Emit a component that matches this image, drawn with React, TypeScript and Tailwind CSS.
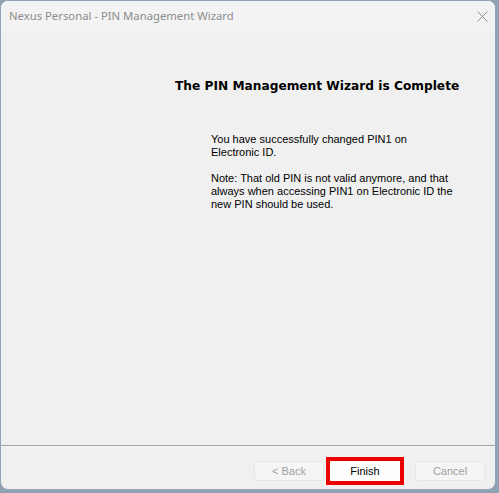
import React from "react";

function WizardButton({
  label,
  disabled = false,
}: {
  label: string;
  disabled?: boolean;
}) {
  return (
    <div
      className={
        "w-[70px] h-[20px] rounded-[3px] flex items-center justify-center text-[11px] font-['Liberation_Sans',Arial,sans-serif] " +
        (disabled
          ? "bg-[#f5f5f5] border border-[#e6e6e6] text-[#a0a0a0]"
          : "bg-[#fdfdfd] text-black")
      }
    >
      {label}
    </div>
  );
}

export default function App() {
  return (
    <div className="w-[499px] h-[493px] bg-[#8ea2b4] overflow-hidden">
      <div className="w-[496px] h-[490px] rounded-[8px] border border-[#94a3b2] bg-[#f0f0f0] overflow-hidden flex flex-col">
        {/* Title bar */}
        <div className="h-[30px] bg-[#f3f3f3] flex items-center justify-between pl-[8px] pr-[7px] shrink-0">
          <span className="text-[11.3px] text-[#8c8c8c] font-['Noto_Sans',sans-serif]">
            Nexus Personal - PIN Management Wizard
          </span>
          <svg width="11" height="11" viewBox="0 0 11 11">
            <path d="M0.5 0.5 L10.5 10.5 M10.5 0.5 L0.5 10.5" stroke="#8c8c8c" strokeWidth="1" />
          </svg>
        </div>

        {/* Body */}
        <div className="flex-1 font-['Liberation_Sans',Arial,sans-serif]">
          <h1 className="pl-[174px] pt-[48px] text-[12.2px] leading-[15px] font-bold text-black whitespace-nowrap font-['DejaVu_Sans',Verdana,sans-serif]">
            The PIN Management Wizard is Complete
          </h1>
          <div className="pl-[210px] pt-[39px] text-[11px] leading-[13px] text-black whitespace-nowrap">
            <p>
              You have successfully changed PIN1 on
              <br />
              Electronic ID.
            </p>
            <p className="mt-[13px]">
              Note: That old PIN is not valid anymore, and that
              <br />
              always when accessing PIN1 on Electronic ID the
              <br />
              new PIN should be used.
            </p>
          </div>
        </div>

        {/* Separator */}
        <div className="h-[1px] bg-[#a0a0a0] shrink-0" />
        <div className="h-[1px] bg-[#fafafa] shrink-0" />

        {/* Buttons */}
        <div className="h-[42px] flex items-start justify-end gap-[2px] pt-[10px] pr-[10px] shrink-0">
          <div className="pt-[4px]">
            <WizardButton label="< Back" disabled />
          </div>
          <div className="border-4 border-[#ee0000]">
            <WizardButton label="Finish" />
          </div>
          <div className="pt-[4px] ml-[9px]">
            <WizardButton label="Cancel" disabled />
          </div>
        </div>
      </div>
    </div>
  );
}
